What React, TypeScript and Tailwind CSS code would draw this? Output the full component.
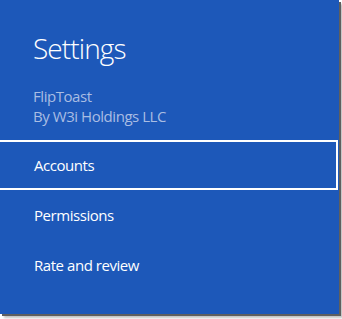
export default function App() {
  const items = ["Accounts", "Permissions", "Rate and review"];
  return (
    <div className="w-[342px] h-[319px] bg-white overflow-hidden" style={{ fontFamily: '"Open Sans", "Noto Sans", sans-serif' }}>
      <div className="w-[339px] h-[314px] bg-[#1d58b9] shadow-[2px_2px_0_0_#5f5f5f,4px_4px_2px_0_#c4c4c4] flex flex-col">
        <div className="px-[33px] pt-[30px]">
          <h1 className="text-[28px] leading-[36px] font-light text-white tracking-[-0.9px]">Settings</h1>
          <div className="mt-[20px] text-[15px] leading-[20px] text-[#a9bde3] tracking-[-0.45px]">
            <p>FlipToast</p>
            <p>By W3i Holdings LLC</p>
          </div>
        </div>
        <ul className="mt-[14px]">
          {items.map((label, i) => (
            <li
              key={label}
              className={`h-[50px] mr-[1px] flex items-center pl-[34px] text-[15px] text-white tracking-[-0.45px] ${
                i === 0 ? "border-y-2 border-r-2 border-white" : ""
              }`}
            >
              {label}
            </li>
          ))}
        </ul>
      </div>
    </div>
  );
}
